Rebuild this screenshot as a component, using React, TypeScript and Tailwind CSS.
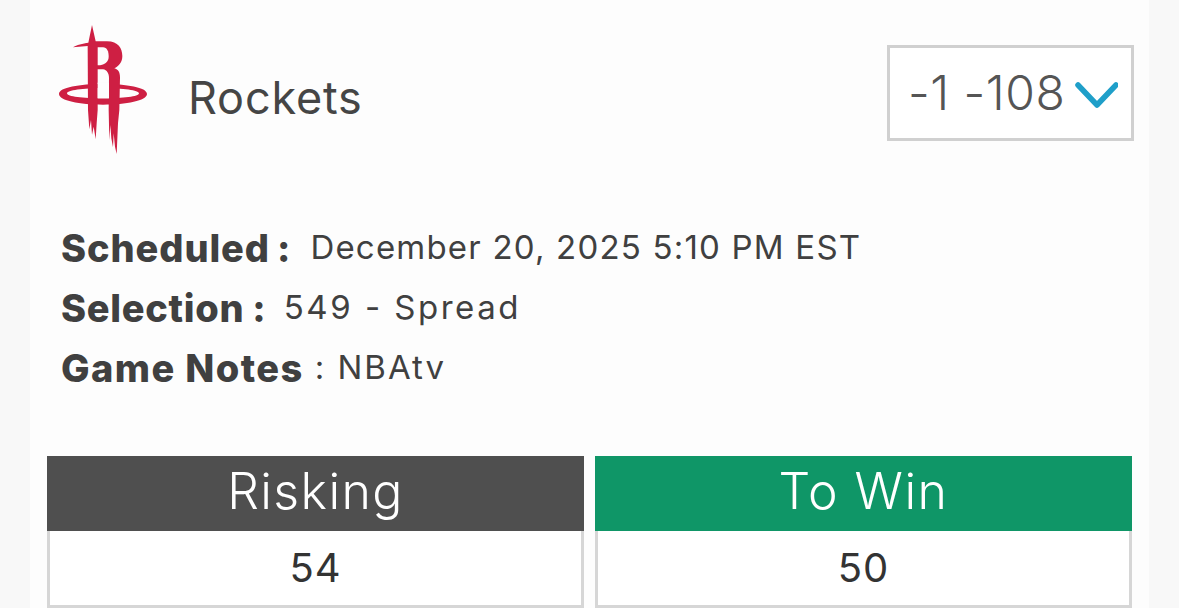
export default function App() {
  return (
    <div className="h-[608px] w-[1179px] overflow-hidden bg-[#f8f8f8] px-[30px] font-['Inter','Liberation_Sans',sans-serif]">
      <div className="h-full w-[1119px] bg-[#fdfdfd]">
        {/* Team row */}
        <div className="flex h-[170px] items-start justify-between pl-[28px] pr-[15px]">
          <div className="flex items-center pt-[25px]">
            <svg width="90" height="130" viewBox="85 45 270 390">
              <g fill="#ce1f43">
                <path fillRule="evenodd" d="M88 252C88 232 150 222 220 222C290 222 352 232 352 252C352 272 290 284 220 284C150 284 88 272 88 252ZM112 250C112 260 160 265 220 265C280 265 328 260 328 250C328 241 280 234 220 234C160 234 112 241 112 250Z" />
                <path d="M187 45L198 94L232 94C266 94 278 116 278 138C278 156 268 168 254 175C266 178 271 188 271 202L269 300L265 340L261 432L256 410L252 370L250 412L245 385L242 345L239 390L237 300L238 205C238 190 232 180 220 178L204 178L204 300L201 340L198 388L192 350L187 375L184 330L179 358L175 300L174 108L130 112C140 105 160 100 176 98Z" />
              </g>
              <path fill="#fdfdfd" d="M204 112L220 112C232 112 237 124 237 140C237 156 224 165 204 166Z" />
              <rect x="204" y="218" width="34" height="47" fill="#fdfdfd" />
            </svg>
            <span className="mt-[15px] ml-[40px] text-[45px] leading-none tracking-[0.8px] text-[#454545]">Rockets</span>
          </div>
          <div className="mt-[45px] flex h-[96px] w-[247px] items-center gap-[9px] border-[3px] border-[#d0d0d0] bg-white pl-[18px]">
            <span className="text-[48px] leading-none font-light tracking-[0.5px] text-[#555555]">-1 -108</span>
            <svg className="mt-[3px]" width="44" height="28" viewBox="0 0 44 28" fill="none">
              <path d="M4 4L23 24L42 4" stroke="#1f9fc9" strokeWidth="5.5" strokeLinecap="round" strokeLinejoin="round" />
            </svg>
          </div>
        </div>

        {/* Details */}
        <div className="mt-[48px] flex flex-col pl-[31px] text-[#404040]">
          <div className="flex h-[60px] items-center">
            <span className="text-[38px] font-extrabold tracking-[0.9px]">Scheduled</span>
            <span className="ml-[7px] text-[38px] font-extrabold">:</span>
            <span className="ml-[20px] text-[33px] tracking-[1.2px]">December 20, 2025 5:10 PM EST</span>
          </div>
          <div className="flex h-[60px] items-center">
            <span className="text-[38px] font-extrabold tracking-[0.7px]">Selection</span>
            <span className="ml-[8px] text-[38px] font-extrabold">:</span>
            <span className="ml-[18px] text-[33px] tracking-[2.5px]">549 - Spread</span>
          </div>
          <div className="flex h-[60px] items-center">
            <span className="text-[38px] font-extrabold tracking-[1.4px]">Game Notes</span>
            <span className="ml-[11px] text-[33px] tracking-[2px]">: NBAtv</span>
          </div>
        </div>

        {/* Amounts */}
        <div className="mt-[58px] grid grid-cols-2 gap-[11px] px-[17px]">
          <div>
            <div className="flex h-[75px] items-center justify-center bg-[#4f4f4f] pb-[4px] text-[50px] font-light tracking-[1.4px] text-white">Risking</div>
            <div className="flex h-[77px] items-center justify-center border-x-[3px] border-b-[3px] border-[#d6d6d6] bg-white text-[40px] tracking-[1px] text-[#333333]">54</div>
          </div>
          <div>
            <div className="flex h-[75px] items-center justify-center bg-[#0f9667] pb-[4px] text-[50px] font-light tracking-[1.5px] text-white">To Win</div>
            <div className="flex h-[77px] items-center justify-center border-x-[3px] border-b-[3px] border-[#d6d6d6] bg-white text-[40px] tracking-[1px] text-[#333333]">50</div>
          </div>
        </div>
      </div>
    </div>
  );
}
